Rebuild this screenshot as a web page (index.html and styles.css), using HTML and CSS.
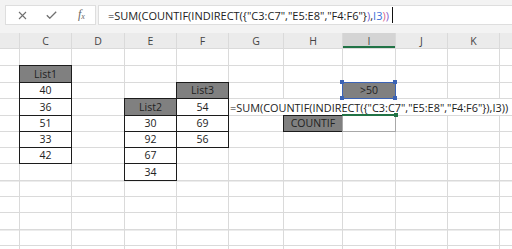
FILE: index.html
```html
<!DOCTYPE html>
<html lang="en">
<head>
	<meta charset="UTF-8">
	<title>COUNTIF INDIRECT</title>
	<link rel="stylesheet" href="styles.css">
</head>
<body>
	<div class="bar">
		<div class="btns">
			<svg class="cross" width="9" height="9" viewBox="0 0 9 9"><path d="M1 1L8 8M8 1L1 8" stroke="#707070" stroke-width="1.1" fill="none"/></svg>
			<svg class="tick" width="11" height="8" viewBox="0 0 11 8"><path d="M0.8 4.2L3.8 7.2L10.2 0.8" stroke="#707070" stroke-width="1.3" fill="none"/></svg>
			<span class="fx">f<sub>x</sub></span>
		</div>
		<div class="formula">=SUM(COUNTIF(INDIRECT({"C3:C7","E5:E8","F4:F6"}<span class="pa">)</span>,<span class="ref">I3</span><span class="pb">)</span><span class="pc">)</span><span class="caret"></span></div>
	</div>

	<div class="grid">
	<table class="sheet">
		<colgroup>
			<col class="cb"><col class="cc"><col class="cd"><col class="ce"><col class="cf"><col class="cg">
			<col class="ch"><col class="ci"><col class="cj"><col class="ck"><col class="cl">
		</colgroup>
		<tr class="hdr"><th></th><th>C</th><th>D</th><th>E</th><th>F</th><th>G</th><th>H</th><th class="on">I</th><th>J</th><th>K</th><th></th></tr>
		<tr class="r16"><td></td><td></td><td></td><td></td><td></td><td></td><td></td><td></td><td></td><td></td><td></td></tr>
		<tr class="r16"><td></td><td class="hd">List1</td><td></td><td></td><td></td><td></td><td></td><td></td><td></td><td></td><td></td></tr>
		<tr class="r15"><td></td><td class="val">40</td><td></td><td></td><td class="hd">List3</td><td></td><td></td><td class="hd sel">&gt;50</td><td></td><td></td><td></td></tr>
		<tr class="r16"><td></td><td class="val">36</td><td></td><td class="hd">List2</td><td class="val">54</td><td class="txt" colspan="6">=SUM(COUNTIF(INDIRECT({"C3:C7","E5:E8","F4:F6"}),I3))</td></tr>
		<tr class="r15"><td></td><td class="val">51</td><td></td><td class="val">30</td><td class="val">69</td><td></td><td class="hd">COUNTIF</td><td class="res"></td><td></td><td></td><td></td></tr>
		<tr class="r15"><td></td><td class="val">33</td><td></td><td class="val">92</td><td class="val">56</td><td></td><td></td><td></td><td></td><td></td><td></td></tr>
		<tr class="r15"><td></td><td class="val">42</td><td></td><td class="val">67</td><td></td><td></td><td></td><td></td><td></td><td></td><td></td></tr>
		<tr class="r16"><td></td><td></td><td></td><td class="val">34</td><td></td><td></td><td></td><td></td><td></td><td></td><td></td></tr>
		<tr class="r15 band"><td></td><td></td><td></td><td></td><td></td><td></td><td></td><td></td><td></td><td></td><td></td></tr>
		<tr class="r15"><td></td><td></td><td></td><td></td><td></td><td></td><td></td><td></td><td></td><td></td><td></td></tr>
		<tr class="r16"><td></td><td></td><td></td><td></td><td></td><td></td><td></td><td></td><td></td><td></td><td></td></tr>
		<tr class="r15 band"><td></td><td></td><td></td><td></td><td></td><td></td><td></td><td></td><td></td><td></td><td></td></tr>
		<tr class="r15"><td></td><td></td><td></td><td></td><td></td><td></td><td></td><td></td><td></td><td></td><td></td></tr>
	</table>
	</div>
</body>
</html>
```

FILE: styles.css
```css
* {
	margin: 0;
	padding: 0;
	box-sizing: border-box;
}
body {
	width: 512px;
	height: 249px;
	overflow: hidden;
	background: #fff;
	font-family: "Open Sans", "Noto Sans", sans-serif;
	color: #222;
}

/* formula bar */
.bar {
	height: 33px;
	background: #f3f3f3;
	display: flex;
	gap: 2px;
	padding: 5px 0 0 5px;
}
.btns {
	width: 91px;
	height: 20px;
	background: #fff;
	border: 1px solid #dedede;
	display: flex;
	align-items: center;
	padding-left: 12px;
}
.tick {
	margin-left: 19px;
}
.fx {
	margin-left: 21px;
	font-family: "Liberation Serif", serif;
	font-style: italic;
	font-size: 12px;
	color: #666;
	line-height: 12px;
}
.fx sub {
	font-size: 8px;
	vertical-align: -1px;
}
.formula {
	flex: 1;
	height: 20px;
	background: #fff;
	border: 1px solid #dedede;
	border-right: 0;
	display: flex;
	align-items: center;
	padding-left: 9px;
	font-size: 11px;
	white-space: nowrap;
	color: #222;
}
.pa { color: #6f5ccf; }
.ref { color: #3a6fd8; }
.pb { color: #d8648c; }
.pc { color: #8a58c6; }
.caret {
	width: 1px;
	height: 16px;
	background: #111;
	margin-left: 3px;
}

/* sheet */
.grid {
	overflow: hidden;
	height: 216px;
}
.sheet {
	table-layout: fixed;
	width: 522px;
	margin: -1px 0 0 -1px;
	border-collapse: separate;
	border-spacing: 1px;
	background: #dadada;
	font-size: 10.5px;
}
.cb { width: 19px; }
.cc { width: 51px; }
.cd { width: 52px; }
.ce { width: 51px; }
.cf { width: 51px; }
.cg { width: 54px; }
.ch { width: 58px; }
.ci { width: 52px; }
.cj { width: 51px; }
.ck { width: 51px; }
.cl { width: 20px; }

.hdr { height: 15px; }
.hdr th {
	background: #ebebeb;
	font-weight: normal;
	color: #444;
	line-height: 14px;
}
.hdr th.on {
	background: #d4d4d4;
	box-shadow: inset 0 -2px 0 #217346;
}
.r16 { height: 16px; }
.r15 { height: 15px; }
td {
	background: #fff;
	text-align: center;
	line-height: 13px;
	white-space: nowrap;
}
.band td {
	box-shadow: inset 0 1px 0 #ececec;
}
.hd {
	background: #808080;
	outline: 1px solid #1c1c1c;
}
.val {
	outline: 1px solid #1c1c1c;
}
.txt {
	text-align: left;
	padding-left: 1px;
	font-size: 10.9px;
	overflow: visible;
}
.sel {
	position: relative;
	outline: 1px solid #3b63b5;
}
.sel::before {
	content: '';
	position: absolute;
	left: -3px;
	top: -3px;
	width: 4px;
	height: 4px;
	background: #3b63b5;
	box-shadow: 53px 0 #3b63b5, 0 16px #3b63b5, 53px 16px #3b63b5;
}
.res {
	position: relative;
	outline: 1px solid #a8a8a8;
}
.res::before {
	content: '';
	position: absolute;
	z-index: 1;
	left: -1px;
	right: -1px;
	top: -2px;
	height: 2px;
	background: #217346;
}
.res::after {
	content: '';
	position: absolute;
	z-index: 1;
	right: -3px;
	top: -3px;
	width: 4px;
	height: 4px;
	background: #217346;
}
```
